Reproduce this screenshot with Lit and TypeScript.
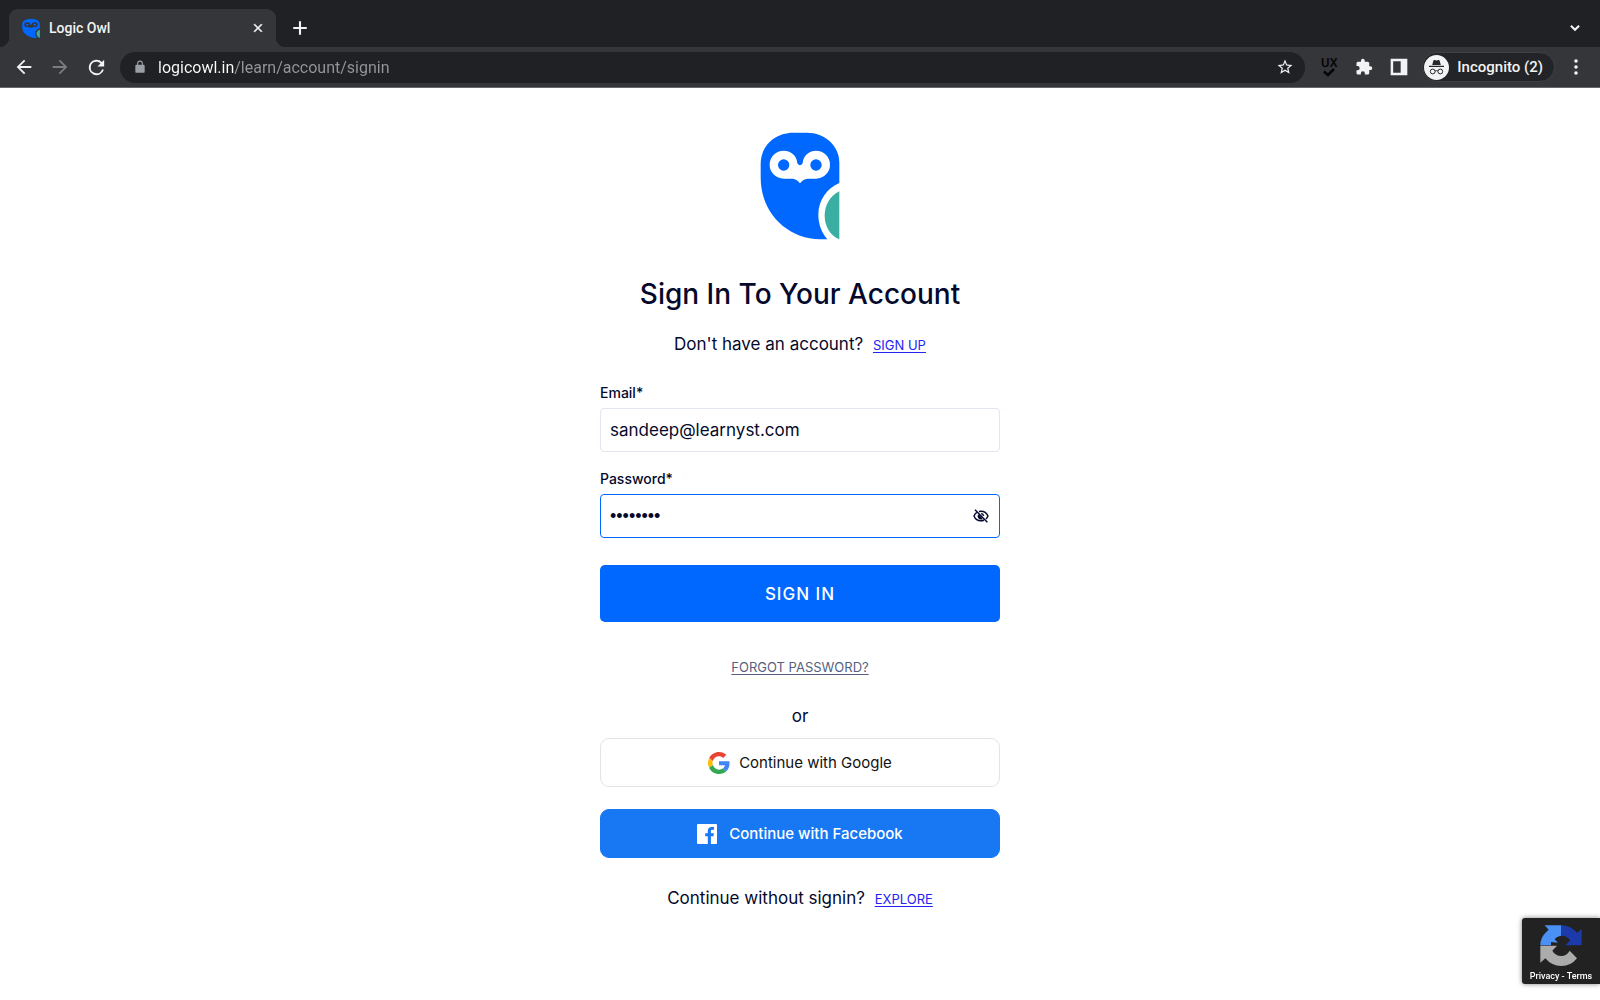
import { LitElement, html, css, svg } from "lit";
import { customElement, state } from "lit/decorators.js";

const owl = (bg: string, cls: string) => html`
  <svg class=${cls} viewBox="60 64 240 324" preserveAspectRatio="none" aria-hidden="true">
    <path fill="#0068ff" d="M62 160C62 105 105 66 160 66H200C255 66 298 105 298 155V217C262 232 235 268 235 312C235 340 245 366 262 386H240C145 384 62 310 62 200Z"/>
    <path fill="#3aaea3" d="M298 242C270 256 254 284 254 315C254 346 270 374 298 386Z"/>
    <path fill=${bg} d="M131 120C155 120 171 137 172 158Q180 170 188 158C189 137 205 120 228 120A42 42 0 0 1 228 204H202Q190 205 180 218Q170 205 158 204H131A42 42 0 0 1 131 120Z"/>
    <circle cx="131" cy="163" r="17" fill="#0068ff"/>
    <circle cx="228" cy="163" r="17" fill="#0068ff"/>
  </svg>`;

const icon = (size: number, body: unknown) => html`
  <svg width=${size} height=${size} viewBox="0 0 24 24" fill="currentColor" aria-hidden="true">${body}</svg>`;

const icons = {
  close: svg`<path d="M19 6.4 17.6 5 12 10.6 6.4 5 5 6.4 10.6 12 5 17.6 6.4 19 12 13.4 17.6 19 19 17.6 13.4 12z" stroke="currentColor"/>`,
  plus: svg`<path d="M10.600 3h2.800v7.600H21v2.800h-7.600V21h-2.800v-7.600H3v-2.800h7.600z"/>`,
  chevron: svg`<path d="m5 8 7 7 7-7" fill="none" stroke="currentColor" stroke-width="3.600"/>`,
  back: svg`<path d="M20 11H7.800l5.600-5.600L12 4l-8 8 8 8 1.400-1.400L7.800 13H20z"/>`,
  forward: svg`<path d="m12 4-1.400 1.400L16.200 11H4v2h12.200l-5.600 5.600L12 20l8-8z"/>`,
  reload: svg`<path d="M17.650 6.350A8 8 0 1 0 19.730 14h-2.080A6 6 0 1 1 12 6c1.660 0 3.140.69 4.220 1.780L13 11h7V4z"/>`,
  lock: svg`<path d="M18 8h-1V6A5 5 0 0 0 7 6v2H6a2 2 0 0 0-2 2v10a2 2 0 0 0 2 2h12a2 2 0 0 0 2-2V10a2 2 0 0 0-2-2M8.900 6a3.100 3.100 0 0 1 6.200 0v2H8.900z"/>`,
  star: svg`<path d="m22 9.240-7.190-.62L12 2 9.190 8.630 2 9.240l5.460 4.730L5.820 21 12 17.270 18.180 21l-1.630-7.030zM12 15.400l-3.760 2.270 1-4.280-3.320-2.880 4.380-.38L12 6.100l1.710 4.040 4.380.38-3.320 2.880 1 4.280z"/>`,
  puzzle: svg`<path d="M20.500 11H19V7a2 2 0 0 0-2-2h-4V3.500a2.500 2.500 0 0 0-5 0V5H4a2 2 0 0 0-2 2v3.800h1.500a2.700 2.700 0 0 1 0 5.400H2V20a2 2 0 0 0 2 2h3.800v-1.500a2.700 2.700 0 0 1 5.400 0V22H17a2 2 0 0 0 2-2v-4h1.500a2.500 2.500 0 0 0 0-5"/>`,
  panel: svg`<path fill-rule="evenodd" d="M2 2h20v20H2zM5 5v14h9V5z"/>`,
  dots: svg`<circle cx="12" cy="4" r="2.400"/><circle cx="12" cy="12" r="2.400"/><circle cx="12" cy="20" r="2.400"/>`,
  eyeOff: svg`<path fill="none" stroke="currentColor" stroke-width="2.200" d="M3 2.500 21.500 21.500M9 5.300Q10.400 4.800 12 4.800C17 4.800 20.800 8 22.500 12Q21.400 14.600 19.400 16.500M5.400 6.800Q2.700 8.900 1.500 12C3.200 16.200 7 19.200 12 19.200Q14.300 19.200 16.300 18.400M12.300 8.200A4 4 0 0 1 15.800 11.800M8.300 10.500A4 4 0 0 0 13.600 15.700"/><path d="m8.500 9.500 5.500 5.800a4 4 0 0 1-5.500-5.800"/>`,
};

@customElement("browser-bar")
export class BrowserBar extends LitElement {
  static styles = css`
    :host { display: block; font-family: Roboto, "Liberation Sans", sans-serif; color: #f1f3f4; }
    button { all: unset; display: inline-flex; align-items: center; justify-content: center; flex: none; cursor: pointer; }
    svg { display: block; flex: none; }
    .tabs { display: flex; height: 47px; padding: 0 14px 0 9px; background: #202124; box-sizing: border-box; }
    .tab { position: relative; display: flex; align-items: center; width: 267px; margin-top: 9px; padding: 0 11px 0 13px; box-sizing: border-box; border-radius: 9px 9px 0 0; background: #35363a; font-size: 14px; font-weight: 500; }
    .tab::before, .tab::after { content: ""; position: absolute; bottom: 0; width: 9px; height: 9px; }
    .tab::before { right: 100%; background: radial-gradient(circle at 0 0, transparent 9px, #35363a 9px); }
    .tab::after { left: 100%; background: radial-gradient(circle at 100% 0, transparent 9px, #35363a 9px); }
    .favicon { width: 18px; height: 19px; margin-right: 9px; }
    .title { flex: 1; }
    .add { width: 48px; margin-top: 9px; }
    .more { margin: 9px 0 0 auto; width: 22px; }
    .toolbar { display: flex; align-items: center; height: 41px; padding: 0 15px 0 13px; box-sizing: border-box; background: #35363a; border-bottom: 1px solid #66676a; }
    .nav { width: 22px; height: 22px; margin-right: 14px; }
    .nav:nth-child(3) { margin-right: 13px; }
    .off { color: #7c7d80; }
    .address { display: flex; align-items: center; flex: 1; height: 31px; padding: 0 11px 0 13px; border-radius: 16px; background: #202124; }
    .lock { color: #9aa0a6; }
    .url { flex: 1; min-width: 0; margin: 0 0 0 11px; padding: 0; border: 0; outline: 0; font: 16px Roboto, "Liberation Sans", sans-serif; color: transparent; caret-color: #fff; background: linear-gradient(90deg, #fff 76px, #93969a 76px); -webkit-background-clip: text; background-clip: text; }
    .actions { display: flex; align-items: center; gap: 16px; padding-left: 14px; }
    .ux { width: 20px; flex-direction: column; color: #050505; font-size: 13px; line-height: 10px; font-weight: 500; }
    .incog { display: flex; align-items: center; gap: 8px; height: 28px; padding: 0 11px 0 1px; margin-left: -3px; border: 1px solid #3f4044; border-radius: 15px; background: #232428; font-size: 15px; font-weight: 500; }
    .kebab { margin-left: -4px; }
  `;

  render() {
    return html`
      <div class="tabs">
        <div class="tab">
          ${owl("#35363a", "favicon")}
          <span class="title">Logic Owl</span>
          <button aria-label="Close tab">${icon(14, icons.close)}</button>
        </div>
        <button class="add" aria-label="New tab">${icon(18, icons.plus)}</button>
        <button class="more" aria-label="Search tabs">${icon(14, icons.chevron)}</button>
      </div>
      <div class="toolbar">
        <button class="nav" aria-label="Back">${icon(22, icons.back)}</button>
        <button class="nav off" aria-label="Forward">${icon(22, icons.forward)}</button>
        <button class="nav" aria-label="Reload">${icon(23, icons.reload)}</button>
        <div class="address">
          <span class="lock">${icon(14, icons.lock)}</span>
          <input class="url" aria-label="Address" .value=${"logicowl.in/learn/account/signin"}>
          <button aria-label="Bookmark">${icon(18, icons.star)}</button>
        </div>
        <div class="actions">
          <button class="ux" aria-label="UX Check">
            <span>UX</span>
            <svg width="12" height="9" viewBox="0 0 12 9" fill="none" stroke="currentColor" stroke-width="2.500"><path d="m1 3.500 4 3.500 6-6"/></svg>
          </button>
          <button aria-label="Extensions">${icon(18, icons.puzzle)}</button>
          <button aria-label="Side panel">${icon(20, icons.panel)}</button>
          <button class="incog">
            <svg width="25" height="25" viewBox="0 0 25 25" aria-hidden="true">
              <circle cx="12.500" cy="12.500" r="12.500" fill="#f1f3f4"/>
              <path fill="#28292c" d="M8.200 10 9.400 5.500Q9.800 4.800 10.600 5.100L12.500 5.600 14.400 5.100Q15.200 4.800 15.600 5.500L16.800 10ZM5 10.700H20V12H5Z"/>
              <path fill="none" stroke="#28292c" d="M11.100 16Q12.500 15.200 13.900 16"/>
              <circle cx="8.700" cy="16.500" r="2.400" fill="none" stroke="#28292c"/>
              <circle cx="16.300" cy="16.500" r="2.400" fill="none" stroke="#28292c"/>
            </svg>
            Incognito (2)
          </button>
          <button class="kebab" aria-label="Menu">${icon(18, icons.dots)}</button>
        </div>
      </div>`;
  }
}

@customElement("sign-in-form")
export class SignInForm extends LitElement {
  @state() private reveal = false;

  static styles = css`
    :host { display: flex; flex-direction: column; align-items: stretch; width: 100%; max-width: 400px; color: #04092c; font-family: Inter, "Open Sans", sans-serif; }
    svg { display: block; flex: none; }
    .logo { width: 80px; height: 108px; align-self: center; }
    h1 { margin: 34px 0 0; text-align: center; font-size: 28px; line-height: 40px; font-weight: 500; }
    p { margin: 0; text-align: center; font-size: 17px; line-height: 24px; }
    .intro { margin: 18px 0 26px; }
    a { margin-left: 5px; font-size: 13px; color: #2424ee; text-underline-offset: 2px; }
    form { display: flex; flex-direction: column; }
    label { font-size: 14px; line-height: 20px; font-weight: 500; margin-bottom: 5px; }
    .field { display: flex; align-items: center; height: 44px; box-sizing: border-box; padding: 0 10px 0 9px; margin-bottom: 17px; border: 1px solid #e2e6f3; border-radius: 4px; background: #fff; }
    .active { border-color: #0068ff; }
    .field input { flex: 1; min-width: 0; border: 0; outline: 0; padding: 0; background: none; color: inherit; font: 17px Inter, "Open Sans", sans-serif; }
    .field input[type="password"] { font: 18px "Liberation Sans", sans-serif; }
    .eye { all: unset; cursor: pointer; }
    .submit { height: 57px; margin-top: 10px; border: 0; border-radius: 5px; background: #0068ff; color: #fff; font: 500 17px Inter, "Open Sans", sans-serif; letter-spacing: 1px; cursor: pointer; }
    .forgot { align-self: center; margin: 35px 0 27px; line-height: 20px; color: #565f80; }
    .or { margin-bottom: 10px; }
    .social { display: flex; align-items: center; justify-content: center; gap: 9px; height: 49px; margin-bottom: 22px; border: 1px solid #e3e4e6; border-radius: 9px; background: #fff; color: #111; font: 15px Inter, "Open Sans", sans-serif; cursor: pointer; }
    .facebook { gap: 12px; border-color: #1877f2; background: #1877f2; color: #fff; font-weight: 500; }
    .explore { margin-top: 6px; }
  `;

  render() {
    return html`
      ${owl("#fff", "logo")}
      <h1>Sign In To Your Account</h1>
      <p class="intro">Don't have an account? <a href="#signup">SIGN UP</a></p>
      <form @submit=${(e: Event) => e.preventDefault()}>
        <label for="email">Email*</label>
        <div class="field"><input id="email" type="email" .value=${"sandeep@learnyst.com"}></div>
        <label for="password">Password*</label>
        <div class="field active">
          <input id="password" type=${this.reveal ? "text" : "password"} .value=${"password"}>
          <button class="eye" type="button" aria-label="Show password" @click=${() => { this.reveal = !this.reveal; }}>${icon(16, icons.eyeOff)}</button>
        </div>
        <button class="submit" type="submit">SIGN IN</button>
      </form>
      <a class="forgot" href="#forgot">FORGOT PASSWORD?</a>
      <p class="or">or</p>
      <button class="social" type="button">
        <svg width="22" height="22" viewBox="0 0 48 48" aria-hidden="true">
          <path fill="#ea4335" d="M24 9.500c3.540 0 6.710 1.220 9.210 3.600l6.850-6.850C35.900 2.380 30.470 0 24 0 14.620 0 6.510 5.380 2.560 13.220l7.980 6.190C12.430 13.720 17.740 9.500 24 9.500z"/>
          <path fill="#4285f4" d="M46.980 24.550c0-1.570-.15-3.090-.38-4.550H24v9.020h12.940c-.58 2.960-2.260 5.480-4.780 7.180l7.730 6c4.510-4.180 7.090-10.360 7.090-17.650z"/>
          <path fill="#fbbc05" d="M10.530 28.590A14.500 14.500 0 0 1 9.770 24c0-1.600.27-3.140.76-4.590l-7.980-6.190A23.900 23.900 0 0 0 0 24c0 3.880.92 7.540 2.560 10.780z"/>
          <path fill="#34a853" d="M24 48c6.480 0 11.930-2.130 15.890-5.810l-7.730-6c-2.150 1.450-4.920 2.300-8.160 2.300-6.260 0-11.570-4.220-13.470-9.910l-7.980 6.190C6.510 42.620 14.620 48 24 48z"/>
        </svg>
        Continue with Google
      </button>
      <button class="social facebook" type="button">
        <svg width="20" height="20" viewBox="0 0 20 20" aria-hidden="true">
          <rect width="20" height="20" rx="1" fill="#fff"/>
          <path fill="#1877f2" d="M10.800 20V12.200H8.200V9.200H10.800V7C10.800 4.400 12.400 3 14.700 3L17 3.100V5.800H15.400C14.100 5.800 13.900 6.400 13.900 7.300V9.200H16.900L16.500 12.200H13.900V20Z"/>
        </svg>
        Continue with Facebook
      </button>
      <p class="explore">Continue without signin? <a href="#explore">EXPLORE</a></p>`;
  }
}

@customElement("app-root")
export class AppRoot extends LitElement {
  static styles = css`
    :host { display: flex; flex-direction: column; min-height: 100vh; background: #fff; }
    main { display: flex; justify-content: center; padding: 44px 20px; }
    .captcha { position: fixed; right: 0; bottom: 16px; display: flex; flex-direction: column; align-items: center; gap: 3px; width: 78px; height: 66px; padding-top: 7px; box-sizing: border-box; border-radius: 3px 0 0 3px; background: #222; box-shadow: 0 0 5px #808080; color: #fff; font: 500 9px/13px Roboto, sans-serif; }
    .captcha a { color: inherit; text-decoration: none; }
  `;

  render() {
    return html`
      <browser-bar></browser-bar>
      <main><sign-in-form></sign-in-form></main>
      <aside class="captcha">
        <svg width="42" height="42" viewBox="120 74 126 126" aria-hidden="true">
          <path fill="#4a90f5" d="M134 75H184V106Q170 108 164 117L174 127 153 125V135H121Q121 112 138 96L146 88Z"/>
          <path fill="#1c3aa9" d="M184 75Q213 76 231 98L245 86V135H196L211 120Q202 106 184 106Z"/>
          <path fill="#ababab" d="M121 136H171L157 151Q165 166 184 167Q200 167 209 151L231 174Q213 197 184 197Q155 197 136 174L121 187Z"/>
        </svg>
        <span><a href="#privacy">Privacy</a> - <a href="#terms">Terms</a></span>
      </aside>`;
  }
}
